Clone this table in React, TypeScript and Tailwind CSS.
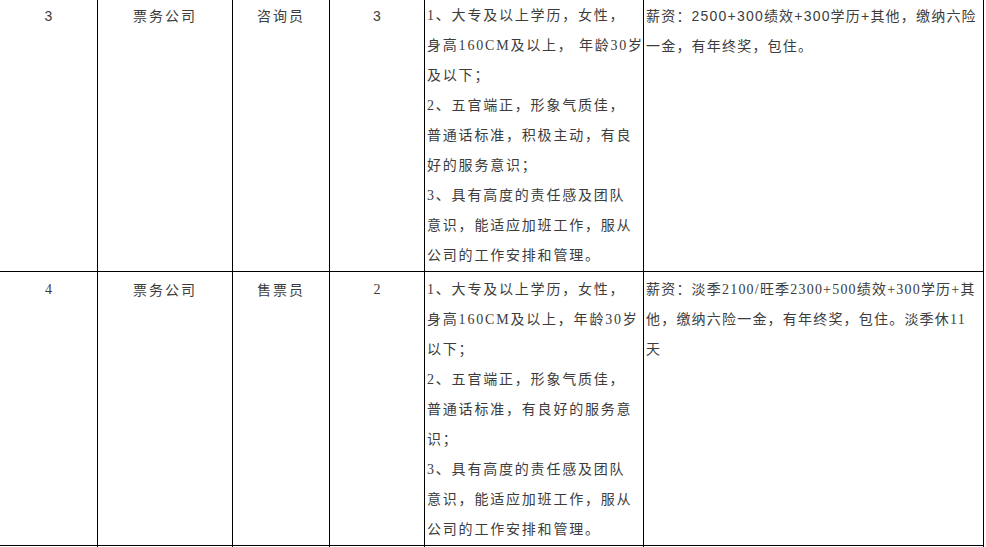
const sans = "font-['Liberation_Sans','Noto_Sans_CJK_SC',sans-serif]";
const serif = "font-['Liberation_Serif','Noto_Sans_CJK_SC',serif]";

type Row = {
  no: string;
  noFont: string;
  dept: string;
  post: string;
  count: string;
  countFont: string;
  req: string[];
  pay: string[];
  payFont: string;
};

const rows: Row[] = [
  {
    no: "3",
    noFont: sans,
    dept: "票务公司",
    post: "咨询员",
    count: "3",
    countFont: sans,
    req: [
      "1、大专及以上学历，女性，",
      "身高160CM及以上， 年龄30岁",
      "及以下；",
      "2、五官端正，形象气质佳，",
      "普通话标准，积极主动，有良",
      "好的服务意识；",
      "3、具有高度的责任感及团队",
      "意识，能适应加班工作，服从",
      "公司的工作安排和管理。",
    ],
    pay: ["薪资：2500+300绩效+300学历+其他，缴纳六险", "一金，有年终奖，包住。"],
    payFont: sans,
  },
  {
    no: "4",
    noFont: serif,
    dept: "票务公司",
    post: "售票员",
    count: "2",
    countFont: serif,
    req: [
      "1、大专及以上学历，女性，",
      "身高160CM及以上，年龄30岁",
      "以下；",
      "2、五官端正，形象气质佳，",
      "普通话标准，有良好的服务意",
      "识；",
      "3、具有高度的责任感及团队",
      "意识，能适应加班工作，服从",
      "公司的工作安排和管理。",
    ],
    pay: ["薪资：淡季2100/旺季2300+500绩效+300学历+其", "他，缴纳六险一金，有年终奖，包住。淡季休11", "天"],
    payFont: serif,
  },
];

const cell = "border-r border-b border-black pt-[3px] leading-[30px]";

export default function App() {
  return (
    <div className="w-[986px] h-[547px] overflow-hidden bg-white text-[#3c3c3c] text-[14px]">
      <div className="-mt-[2px] grid grid-cols-[98px_135px_97px_95px_219px_340px] w-[984px]">
        {rows.map((r) => (
          <div key={r.no} className="contents">
            <div className={`${cell} ${r.noFont} text-center`}>{r.no}</div>
            <div className={`${cell} ${sans} text-center tracking-[2px]`}>{r.dept}</div>
            <div className={`${cell} ${sans} text-center tracking-[2px]`}>{r.post}</div>
            <div className={`${cell} ${r.countFont} text-center`}>{r.count}</div>
            <div className={`${cell} ${serif} pl-[2px] tracking-[1.8px]`}>
              {r.req.map((l, i) => (
                <div key={i} className="whitespace-pre">{l}</div>
              ))}
            </div>
            <div className={`${cell} ${r.payFont} pl-[2px] tracking-[1.2px]`}>
              {r.pay.map((l, i) => (
                <div key={i} className="whitespace-pre">{l}</div>
              ))}
            </div>
          </div>
        ))}
        <div className="border-r border-black h-[30px]" />
        <div className="border-r border-black h-[30px]" />
        <div className="border-r border-black h-[30px]" />
        <div className="border-r border-black h-[30px]" />
        <div className="border-r border-black h-[30px]" />
        <div className="border-r border-black h-[30px]" />
      </div>
    </div>
  );
}
